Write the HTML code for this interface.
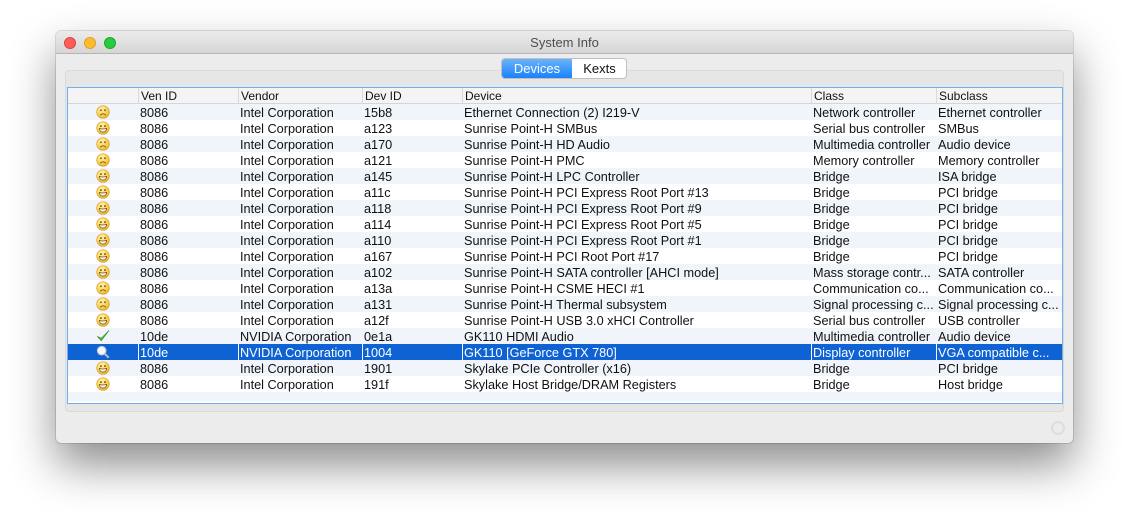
<!DOCTYPE html>
<html><head><meta charset="utf-8"><style>
*{margin:0;padding:0;box-sizing:border-box}
body{width:1129px;height:524px;background:#fff;position:relative;overflow:hidden;font-family:"Liberation Sans",sans-serif;font-size:12.7px;color:#111}
.win{position:absolute;left:56px;top:31px;width:1017px;height:412px;background:#ececec;border-radius:5px;box-shadow:0 22px 45px rgba(0,0,0,.45),0 0 0 1px rgba(0,0,0,.12)}
.tb{position:absolute;left:0;top:0;width:1017px;height:23px;border-radius:5px 5px 0 0;background:linear-gradient(#ebebeb,#d6d6d6);border-bottom:1px solid #b5b5b5;text-align:center;line-height:23px;font-size:13px;color:#4d4d4d}
.dot{position:absolute;top:6px;width:12px;height:12px;border-radius:50%}
.panel{position:absolute;left:9px;top:39px;width:999px;height:342px;background:#e6e6e6;border:1px solid #dadada;border-radius:4px}
.tabs{position:absolute;left:445px;top:27px;height:21px;width:126px;border:1px solid #c0c0c0;border-radius:4px;background:#fff;font-size:13px;line-height:19px;overflow:hidden}
.tabs .a{position:absolute;left:0;top:0;width:70px;height:19px;background:linear-gradient(#6cb3fa,#1a82fb);color:#fff;text-align:center}
.tabs .b{position:absolute;left:70px;top:0;width:55px;text-align:center;color:#111}
.tbl{position:absolute;left:67px;top:87px;width:996px;height:317px;background:#fff;border:1px solid #6eb0f0}
.hd{position:absolute;left:0;top:0;width:994px;height:16px;background:#f4f4f4;border-bottom:1px solid #d6d6d6;font-size:12px;line-height:17px}
.r{position:absolute;left:0;width:994px;height:16px;line-height:18px;white-space:nowrap}
.r.o{background:#f1f4fa}
.r.s{background:#0e62d4;color:#fff}
.c{position:absolute;top:0;overflow:hidden}
.hd .c{border-left:1px solid #d9d9d9;padding-left:2px}
.r.s .c{border-left:1px solid #fff}
.ic{position:absolute;left:28px;top:1px}
</style></head><body>
<div class="win">
<div class="tb">System Info
<div class="dot" style="left:8px;background:#fc5f57;border:1px solid #e0443e"></div>
<div class="dot" style="left:28px;background:#fdbc2e;border:1px solid #dea123"></div>
<div class="dot" style="left:48px;background:#29c940;border:1px solid #1aab29"></div>
</div>
<div class="panel"></div>
<div class="tabs"><div class="a">Devices</div><div class="b">Kexts</div></div>
<div style="position:absolute;right:8px;bottom:8px;width:14px;height:14px;border:2px solid #ddd;border-radius:50%"></div>
</div>
<svg width="0" height="0" style="position:absolute"><defs>
<radialGradient id="fg" cx=".4" cy=".3" r=".8"><stop offset="0" stop-color="#fff3b0"/><stop offset=".6" stop-color="#f8cf4a"/><stop offset="1" stop-color="#e0a020"/></radialGradient>
<symbol id="happy" viewBox="0 0 16 16"><circle cx="8" cy="8" r="7.2" fill="url(#fg)" stroke="#d8a030" stroke-width=".8"/><ellipse cx="5.7" cy="5.8" rx=".9" ry="1.2" fill="#6b4a10"/><ellipse cx="10.3" cy="5.8" rx=".9" ry="1.2" fill="#6b4a10"/><path d="M3.8 8.6Q8 9.6 12.2 8.6Q11.5 12.6 8 12.6Q4.5 12.6 3.8 8.6Z" fill="#fff" stroke="#6b4a10" stroke-width=".8"/></symbol>
<symbol id="sad" viewBox="0 0 16 16"><circle cx="8" cy="8" r="7.2" fill="url(#fg)" stroke="#d8a030" stroke-width=".8"/><ellipse cx="5.7" cy="6" rx=".9" ry="1.2" fill="#6b4a10"/><ellipse cx="10.3" cy="6" rx=".9" ry="1.2" fill="#6b4a10"/><path d="M4.8 11.6Q8 8.6 11.2 11.6" fill="none" stroke="#6b4a10" stroke-width="1"/></symbol>
<symbol id="chk" viewBox="0 0 16 16"><path d="M1.5 8.5L6 13.5L15 1.5L6 10.5Z" fill="#4fc23f" stroke="#2f8a25" stroke-width=".7"/></symbol>
<symbol id="mag" viewBox="0 0 16 16"><circle cx="6.5" cy="6.5" r="4.8" fill="#f4f8ff" stroke="#ccc" stroke-width="1.4"/><path d="M10 10L14.5 14.5" stroke="#bbb" stroke-width="2.4"/></symbol>
</defs></svg>
<div class="tbl">
<div class="hd">
<div class="c" style="left:70px;width:100px">Ven ID</div>
<div class="c" style="left:170px;width:124px">Vendor</div>
<div class="c" style="left:294px;width:100px">Dev ID</div>
<div class="c" style="left:394px;width:349px">Device</div>
<div class="c" style="left:743px;width:125px">Class</div>
<div class="c" style="left:868px;width:126px">Subclass</div>
</div>
<div id="rows"></div>
<div class="r o" style="top:304px;height:9px"></div>
</div>
<script>
var d=[["sad","8086","Intel Corporation","15b8","Ethernet Connection (2) I219-V","Network controller","Ethernet controller"],
["happy","8086","Intel Corporation","a123","Sunrise Point-H SMBus","Serial bus controller","SMBus"],
["sad","8086","Intel Corporation","a170","Sunrise Point-H HD Audio","Multimedia controller","Audio device"],
["sad","8086","Intel Corporation","a121","Sunrise Point-H PMC","Memory controller","Memory controller"],
["happy","8086","Intel Corporation","a145","Sunrise Point-H LPC Controller","Bridge","ISA bridge"],
["happy","8086","Intel Corporation","a11c","Sunrise Point-H PCI Express Root Port #13","Bridge","PCI bridge"],
["happy","8086","Intel Corporation","a118","Sunrise Point-H PCI Express Root Port #9","Bridge","PCI bridge"],
["happy","8086","Intel Corporation","a114","Sunrise Point-H PCI Express Root Port #5","Bridge","PCI bridge"],
["happy","8086","Intel Corporation","a110","Sunrise Point-H PCI Express Root Port #1","Bridge","PCI bridge"],
["happy","8086","Intel Corporation","a167","Sunrise Point-H PCI Root Port #17","Bridge","PCI bridge"],
["happy","8086","Intel Corporation","a102","Sunrise Point-H SATA controller [AHCI mode]","Mass storage contr...","SATA controller"],
["sad","8086","Intel Corporation","a13a","Sunrise Point-H CSME HECI #1","Communication co...","Communication co..."],
["sad","8086","Intel Corporation","a131","Sunrise Point-H Thermal subsystem","Signal processing c...","Signal processing c..."],
["happy","8086","Intel Corporation","a12f","Sunrise Point-H USB 3.0 xHCI Controller","Serial bus controller","USB controller"],
["chk","10de","NVIDIA Corporation","0e1a","GK110 HDMI Audio","Multimedia controller","Audio device"],
["mag","10de","NVIDIA Corporation","1004","GK110 [GeForce GTX 780]","Display controller","VGA compatible c..."],
["happy","8086","Intel Corporation","1901","Skylake PCIe Controller (x16)","Bridge","PCI bridge"],
["happy","8086","Intel Corporation","191f","Skylake Host Bridge/DRAM Registers","Bridge","Host bridge"]];
var L=[[70,100],[170,124],[294,100],[394,349],[743,125],[868,126]],h="";
d.forEach(function(r,i){var cl="r"+(i==15?" s":(i%2==0?" o":""));
h+='<div class="'+cl+'" style="top:'+(16+i*16)+'px"><svg class="ic" width="14" height="14"><use href="#'+r[0]+'"/></svg>';
for(var k=0;k<6;k++)h+='<div class="c" style="left:'+L[k][0]+'px;width:'+L[k][1]+'px;padding-left:'+(i==15?1:2)+'px">'+r[k+1]+'</div>';
h+='</div>';});
document.getElementById("rows").outerHTML=h;
</script>
</body></html>
